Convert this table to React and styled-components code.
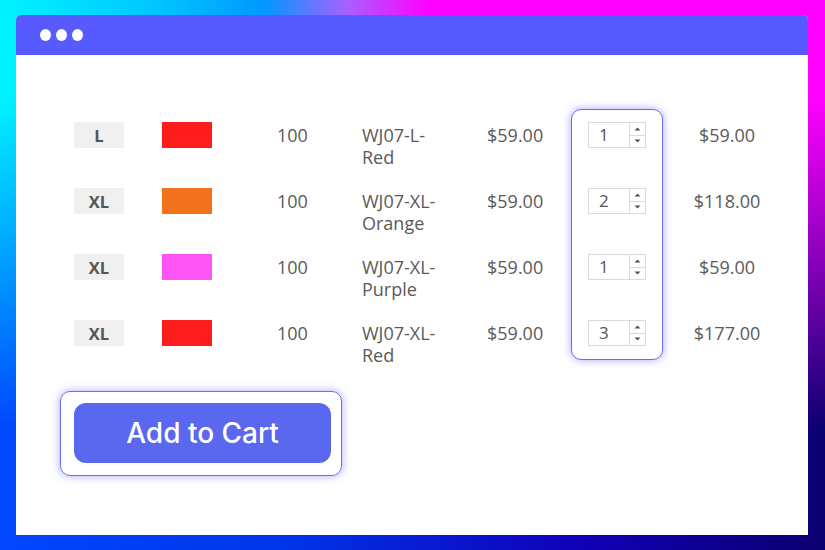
import React from "react";
import styled, { createGlobalStyle } from "styled-components";

const rows = [
  { size: "L", color: "#ff1c1c", stock: 100, sku: ["WJ07-L-", "Red"], price: "$59.00", qty: 1, total: "$59.00" },
  { size: "XL", color: "#f2711c", stock: 100, sku: ["WJ07-XL-", "Orange"], price: "$59.00", qty: 2, total: "$118.00" },
  { size: "XL", color: "#ff55f7", stock: 100, sku: ["WJ07-XL-", "Purple"], price: "$59.00", qty: 1, total: "$59.00" },
  { size: "XL", color: "#ff1c1c", stock: 100, sku: ["WJ07-XL-", "Red"], price: "$59.00", qty: 3, total: "$177.00" },
];

const Arrow = ({ up }) => (
  <svg width="7" height="4" viewBox="0 0 7 4">
    <path d={up ? "M0.5 3.5 L3.5 0.5 L6.5 3.5 Z" : "M0.5 0.5 L3.5 3.5 L6.5 0.5 Z"} fill="#555" />
  </svg>
);

const App = () => {
  return (
    <Page>
      <GlobalStyle />
      <Window>
        <TitleBar>
          <Dot />
          <Dot />
          <Dot />
        </TitleBar>
        <Body>
          <Grid>
            <QtyPanel />
            {rows.map((r, i) => (
              <React.Fragment key={i}>
                <SizeBadge $row={i + 1}>{r.size}</SizeBadge>
                <Swatch $row={i + 1} $color={r.color} />
                <Cell $row={i + 1} $col={3}>{r.stock}</Cell>
                <Cell $row={i + 1} $col={4}>
                  {r.sku[0]}
                  <br />
                  {r.sku[1]}
                </Cell>
                <Cell $row={i + 1} $col={5}>{r.price}</Cell>
                <Stepper $row={i + 1}>
                  <StepValue>{r.qty}</StepValue>
                  <Spinner>
                    <SpinHalf>
                      <Arrow up />
                    </SpinHalf>
                    <SpinHalf>
                      <Arrow />
                    </SpinHalf>
                  </Spinner>
                </Stepper>
                <TotalCell $row={i + 1}>{r.total}</TotalCell>
              </React.Fragment>
            ))}
          </Grid>
          <ButtonFrame>
            <CartButton>Add to Cart</CartButton>
          </ButtonFrame>
        </Body>
      </Window>
    </Page>
  );
};

export default App;

const GlobalStyle = createGlobalStyle`
  html, body {
    margin: 0;
    padding: 0;
  }
  body {
    font-family: "Open Sans", "Liberation Sans", sans-serif;
  }
`;

const Page = styled.div`
  position: relative;
  width: 825px;
  height: 550px;
  box-sizing: border-box;
  padding: 15px 17px 15px 16px;
  display: flex;
  background: linear-gradient(90deg, #0048ff 0%, #0034e8 35%, #1000b8 70%, #0c0070 100%);
  overflow: hidden;

  &::before {
    content: "";
    position: absolute;
    inset: 0;
    background: linear-gradient(
      90deg,
      #00f4ff 0%,
      #00c8ff 18%,
      #0098ff 32%,
      #a860ff 42%,
      #ff00ff 52%,
      #ff00ff 100%
    );
    -webkit-mask-image: linear-gradient(180deg, #000 0%, #000 18%, transparent 78%);
    mask-image: linear-gradient(180deg, #000 0%, #000 18%, transparent 78%);
  }
`;

const Window = styled.div`
  position: relative;
  flex: 1;
  display: flex;
  flex-direction: column;
  background: #ffffff;
  border-radius: 5px 5px 0 0;
  overflow: hidden;
`;

const TitleBar = styled.div`
  height: 40px;
  flex-shrink: 0;
  background: #565aff;
  display: flex;
  align-items: center;
  gap: 5px;
  padding-left: 24px;
`;

const Dot = styled.span`
  width: 11px;
  height: 12px;
  border-radius: 50%;
  background: #ffffff;
`;

const Body = styled.div`
  padding: 67px 0 0 44px;
  display: flex;
  flex-direction: column;
  align-items: flex-start;
`;

const Grid = styled.div`
  display: grid;
  margin-left: 14px;
  grid-template-columns: 88px 115px 85px 125px 84px 92px 128px;
  grid-template-rows: repeat(4, 26px);
  row-gap: 40px;
  color: #5a5a5a;
  font-size: 18px;
`;

const QtyPanel = styled.div`
  grid-column: 6;
  grid-row: 1 / -1;
  margin: -13px 0 -14px;
  border: 1.5px solid #6a6ef5;
  border-radius: 10px;
  box-shadow: 0 0 8px rgba(95, 95, 255, 0.55);
  background: #ffffff;
`;

const SizeBadge = styled.div`
  grid-column: 1;
  grid-row: ${(p) => p.$row};
  width: 50px;
  height: 26px;
  background: #f0f0f0;
  display: flex;
  align-items: center;
  justify-content: center;
  font-size: 16.5px;
  font-weight: 700;
  color: #555555;
`;

const Swatch = styled.div`
  grid-column: 2;
  grid-row: ${(p) => p.$row};
  width: 50px;
  height: 26px;
  background: ${(p) => p.$color};
`;

const Cell = styled.div`
  grid-column: ${(p) => p.$col};
  grid-row: ${(p) => p.$row};
  line-height: 22px;
  margin-top: 2px;
  white-space: nowrap;
`;

const TotalCell = styled(Cell).attrs({ $col: 7 })`
  text-align: center;
`;

const Stepper = styled.div`
  grid-column: 6;
  grid-row: ${(p) => p.$row};
  justify-self: center;
  width: 58px;
  height: 26px;
  box-sizing: border-box;
  border: 1px solid #dadada;
  display: flex;
  background: #ffffff;
`;

const StepValue = styled.div`
  flex: 1;
  padding-left: 10px;
  font-size: 17px;
  line-height: 24px;
  color: #555555;
`;

const Spinner = styled.div`
  width: 15px;
  border-left: 1px solid #dadada;
  display: flex;
  flex-direction: column;
`;

const SpinHalf = styled.div`
  flex: 1;
  display: flex;
  align-items: center;
  justify-content: center;
  & + & {
    border-top: 1px solid #dadada;
  }
`;

const ButtonFrame = styled.div`
  margin-top: 45px;
  padding: 11px 10px 12px 13px;
  border: 1.5px solid #6a6ef5;
  border-radius: 10px;
  box-shadow: 0 0 8px rgba(95, 95, 255, 0.55);
`;

const CartButton = styled.button`
  width: 257px;
  height: 60px;
  border: none;
  border-radius: 12px;
  background: #5a68f0;
  color: #ffffff;
  font-family: "Inter", "Open Sans", sans-serif;
  font-size: 28px;
  font-weight: 500;
  cursor: pointer;
`;
